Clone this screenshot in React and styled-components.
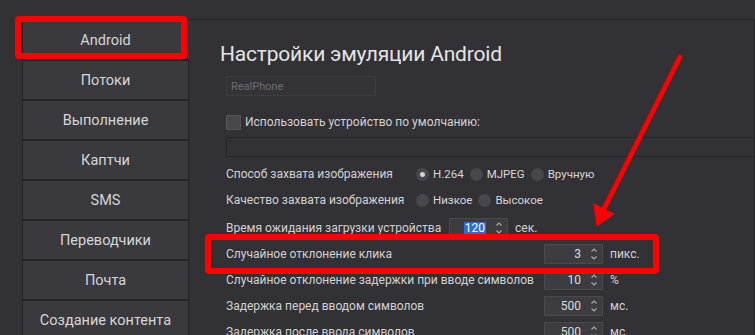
import React from 'react';
import styled, { createGlobalStyle, css } from 'styled-components';

const Global = createGlobalStyle`
  html, body { margin: 0; padding: 0; background: #323136; }
  body { font-family: Roboto, "Noto Sans", sans-serif; }
  * { box-sizing: border-box; }
`;

const Window = styled.div`
  position: relative;
  width: 755px;
  height: 335px;
  overflow: hidden;
  display: flex;
  background: #323136;
  color: #d2d2d2;
  font-family: Roboto, "Noto Sans", sans-serif;
`;

const Sidebar = styled.nav`
  width: 189px;
  flex: none;
  padding: 20px 0 0 22px;
  display: flex;
  flex-direction: column;
`;

const NavButton = styled.div`
  height: 40px;
  flex: none;
  display: flex;
  align-items: center;
  justify-content: center;
  background: #3a393e;
  border: 1px solid #242327;
  font-size: 14.5px;
  color: #d6d6d6;
  ${(p) =>
    p.$active &&
    css`
      border-right-color: #3a393e;
    `}
`;

const Main = styled.main`
  flex: 1;
  margin-top: 19px;
  border-top: 1px solid #242327;
  border-right: 1px solid #242327;
  display: flex;
  flex-direction: column;
  padding-left: 37px;
  & > * { flex: none; }
`;

const Title = styled.h1`
  margin: 21px 0 0 -6px;
  font-size: 21px;
  letter-spacing: -0.2px;
  line-height: 27px;
  font-weight: 400;
  color: #e4e4e4;
`;

const NameInput = styled.input`
  margin-top: 8px;
  width: 150px;
  height: 20px;
  border: 1px solid #3e3d42;
  background: #343338;
  padding: 0 4px;
  font-family: inherit;
  font-size: 11px;
  color: #d2d2d2;
  outline: none;
  &::placeholder { color: #6e6e72; }
`;

const CheckRow = styled.div`
  margin-top: 18px;
  height: 16px;
  display: flex;
  align-items: center;
  gap: 4px;
  font-size: 12px;
`;

const CheckBox = styled.span`
  width: 15px;
  height: 15px;
  background: #48474c;
  border: 1px solid #56555a;
  flex: none;
`;

const WideInput = styled.div`
  margin-top: 7px;
  height: 20px;
  border: 1px solid #242327;
  border-right: none;
  background: #323136;
`;

const FormRow = styled.div`
  height: 26px;
  display: flex;
  align-items: center;
  font-size: 12px;
  margin-top: ${(p) => p.$mt || 0}px;
`;

const Label = styled.span`
  width: ${(p) => p.$w}px;
  flex: none;
  white-space: nowrap;
`;

const RadioGroup = styled.div`
  display: flex;
  align-items: center;
  gap: 6px;
`;

const RadioItem = styled.span`
  display: flex;
  align-items: center;
  gap: 4px;
  font-size: 11.5px;
  color: #d6d6d6;
`;

const RadioDot = styled.span`
  width: 13px;
  height: 13px;
  border-radius: 50%;
  background: #48474c;
  display: flex;
  align-items: center;
  justify-content: center;
  &::after {
    content: '';
    width: 5px;
    height: 5px;
    border-radius: 50%;
    background: ${(p) => (p.$checked ? '#d4d4d4' : 'transparent')};
  }
`;

const SpinBox = styled.div`
  width: ${(p) => p.$w || 59}px;
  height: 20px;
  display: flex;
  align-items: center;
  background: #3d3c41;
  border: 1px solid #4a494e;
  font-size: 12px;
  color: #dcdcdc;
`;

const SpinValue = styled.span`
  flex: 1;
  padding-right: 6px;
  display: flex;
  justify-content: flex-end;
`;

const Selected = styled.span`
  background: #2a6fd0;
  color: #ffffff;
  padding: 0 1px;
  line-height: 13px;
`;

const SpinArrows = styled.svg`
  width: 14px;
  height: 18px;
  flex: none;
  margin-right: 1px;
`;

const Unit = styled.span`
  margin-left: 7px;
  font-size: 12px;
`;

const Highlight = styled.div`
  position: absolute;
  left: ${(p) => p.$x}px;
  top: ${(p) => p.$y}px;
  width: ${(p) => p.$w}px;
  height: ${(p) => p.$h}px;
  border: 6px solid #ff0000;
  border-radius: 4px;
  pointer-events: none;
`;

const Overlay = styled.svg`
  position: absolute;
  left: 0;
  top: 0;
  width: 755px;
  height: 335px;
  pointer-events: none;
`;

const Arrows = () => (
  <SpinArrows viewBox="0 0 14 18">
    <polyline points="4.5,6.5 7,4 9.5,6.5" fill="none" stroke="#a8a8a8" strokeWidth="1.2" />
    <polyline points="4.5,11.5 7,14 9.5,11.5" fill="none" stroke="#a8a8a8" strokeWidth="1.2" />
  </SpinArrows>
);

const Spin = ({ value, selected }) => (
  <SpinBox>
    <SpinValue>{selected ? <Selected>{value}</Selected> : value}</SpinValue>
    <Arrows />
  </SpinBox>
);

const navItems = ['Android', 'Потоки', 'Выполнение', 'Каптчи', 'SMS', 'Переводчики', 'Почта', 'Создание контента'];

export default function App() {
  return (
    <>
      <Global />
      <Window>
        <Sidebar>
          {navItems.map((n, i) => (
            <NavButton key={n} $active={i === 0}>
              {n}
            </NavButton>
          ))}
        </Sidebar>
        <Main>
          <Title>Настройки эмуляции Android</Title>
          <NameInput placeholder="RealPhone" readOnly />
          <CheckRow>
            <CheckBox />
            <span>Использовать устройство по умолчанию:</span>
          </CheckRow>
          <WideInput />
          <FormRow $mt={4}>
            <Label $w={190}>Способ захвата изображения</Label>
            <RadioGroup>
              <RadioItem><RadioDot $checked />H.264</RadioItem>
              <RadioItem><RadioDot />MJPEG</RadioItem>
              <RadioItem><RadioDot />Вручную</RadioItem>
            </RadioGroup>
          </FormRow>
          <FormRow>
            <Label $w={190}>Качество захвата изображения</Label>
            <RadioGroup>
              <RadioItem><RadioDot />Низкое</RadioItem>
              <RadioItem><RadioDot />Высокое</RadioItem>
            </RadioGroup>
          </FormRow>
          <FormRow $mt={2}>
            <Label $w={223}>Время ожидания загрузки устройства</Label>
            <Spin value="120" selected />
            <Unit>сек.</Unit>
          </FormRow>
          <FormRow>
            <Label $w={318}>Случайное отклонение клика</Label>
            <Spin value="3" />
            <Unit>пикс.</Unit>
          </FormRow>
          <FormRow>
            <Label $w={318}>Случайное отклонение задержки при вводе символов</Label>
            <Spin value="10" />
            <Unit>%</Unit>
          </FormRow>
          <FormRow>
            <Label $w={318}>Задержка перед вводом символов</Label>
            <Spin value="500" />
            <Unit>мс.</Unit>
          </FormRow>
          <FormRow>
            <Label $w={318}>Задержка после ввода символов</Label>
            <Spin value="500" />
            <Unit>мс.</Unit>
          </FormRow>
        </Main>
        <Highlight $x={15} $y={16} $w={172} $h={43} />
        <Highlight $x={205} $y={234} $w={454} $h={40} />
        <Overlay viewBox="0 0 755 335">
          <line x1="680" y1="57" x2="604" y2="209" stroke="#ff0000" strokeWidth="5" strokeLinecap="round" />
          <polygon points="594,204 614,214 597,226" fill="#ff0000" stroke="#ff0000" strokeWidth="1" strokeLinejoin="round" />
        </Overlay>
      </Window>
    </>
  );
}
